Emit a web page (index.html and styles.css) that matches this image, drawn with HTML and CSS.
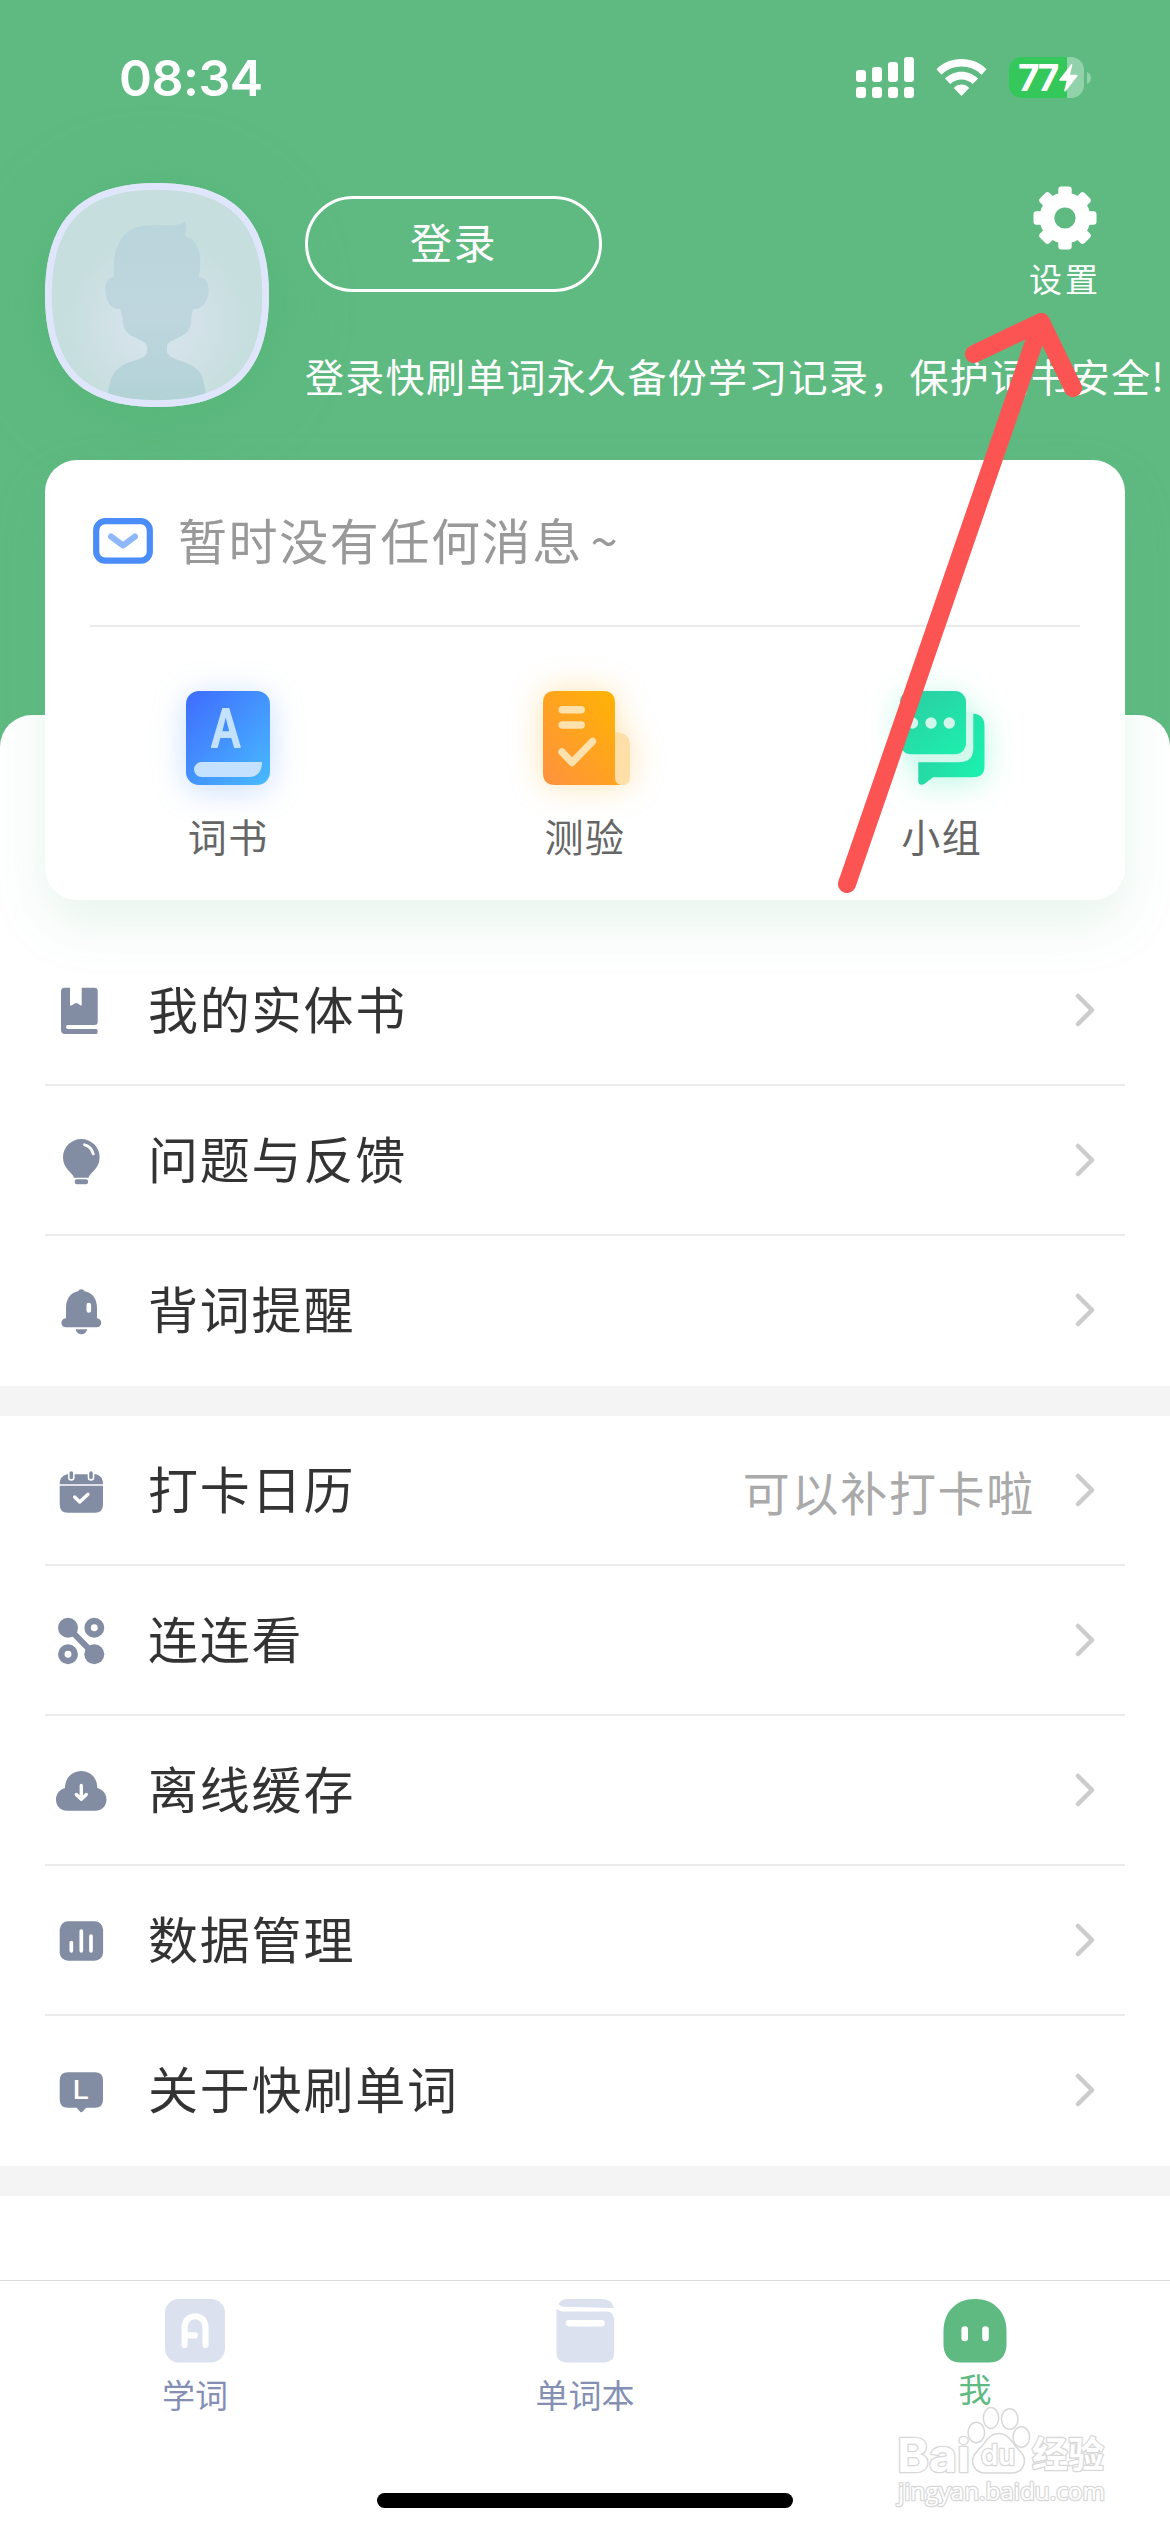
FILE: index.html
```html
<!DOCTYPE html>
<html lang="zh-CN">
<head>
<meta charset="utf-8">
<title>我</title>
<link rel="stylesheet" href="styles.css">
</head>
<body>
<div class="page">
  <header class="header">
    <div class="status">
      <span class="time">08:34</span>
      <div class="status-icons">
        <svg width="58" height="41" viewBox="0 0 58 41" fill="#fff">
          <rect x="0" y="13" width="10" height="12" rx="3"/><rect x="16" y="10" width="10" height="15" rx="3"/>
          <rect x="32" y="5" width="10" height="20" rx="3"/><rect x="48" y="0" width="10" height="25" rx="3"/>
          <rect x="0" y="30" width="10" height="11" rx="3"/><rect x="16" y="30" width="10" height="11" rx="3"/>
          <rect x="32" y="30" width="10" height="11" rx="3"/><rect x="48" y="30" width="10" height="11" rx="3"/>
        </svg>
        <svg width="51" height="37" viewBox="0 0 51 37" fill="#fff">
          <path d="M25.500 0C35 0 44 3.500 50.500 10.200L45.500 15.800C40 10.300 33 7.600 25.500 7.600S11 10.300 5.500 15.800L.5 10.200C7 3.500 16 0 25.500 0Z"/>
          <path d="M25.500 12.800C31.500 12.800 37.500 15.200 42 19.600L36.800 25C33.500 22 29.700 20.500 25.500 20.500S17.500 22 14.200 25L9 19.600C13.500 15.200 19.500 12.800 25.500 12.800Z"/>
          <path d="M25.500 25.500C28.600 25.500 31 26.700 33.200 28.900L25.500 37L17.800 28.900C20 26.700 22.400 25.500 25.500 25.500Z"/>
        </svg>
        <div class="battery">
          <div class="battery-body">
            <span class="battery-num">77</span>
            <svg width="19" height="28" viewBox="0 0 19 28" fill="#fff"><path d="M12 .5C13 0 13.500.5 13.200 1.500L11 10.800H17.500C18.500 10.800 18.800 11.600 18.200 12.400L6.800 27C6 27.900 5 27.400 5.300 26.200L7.600 16.800H1.200C.2 16.800 0 16 .6 15.200Z"/></svg>
          </div>
          <svg width="4" height="12" viewBox="0 0 4 12" fill="#92d2aa"><path d="M0 0C2.500 1 4 3.300 4 6S2.500 11 0 12Z"/></svg>
        </div>
      </div>
    </div>
    <div class="profile">
      <svg class="avatar" width="224" height="224" viewBox="0 0 224 224">
        <defs>
          <radialGradient id="face" gradientUnits="userSpaceOnUse" cx="112" cy="140" r="92"><stop offset=".3" stop-color="#d5e3eb"/><stop offset="1" stop-color="#c6dedd"/></radialGradient>
          <linearGradient id="man" x1="0" y1="0" x2="0" y2="1"><stop offset="0" stop-color="#bad5db"/><stop offset=".5" stop-color="#bfd6df"/><stop offset="1" stop-color="#b1d2d5"/></linearGradient>
          <clipPath id="blob"><path d="M112 0C188 0 224 36 224 112S188 224 112 224S0 188 0 112S36 0 112 0Z"/></clipPath>
        </defs>
        <g clip-path="url(#blob)">
          <rect width="224" height="224" fill="url(#face)"/>
          <path fill="url(#man)" d="M69 94C67 62 77 42 108 42C120 42 134 44 140 38.500C142 43 141 48 140 53C153 57 158 70 154 94C162 94 164 102 163.500 109C163 119 157 127 148 126C145 134 148 142 143 148C138 155 123 157 122 163V169C124 176 136 177 146 182C157 188 160 196 162 224H62C63 196 68 188 78 182C88 177 101 176 102 169V163C101 157 86 155 81 148C77 142 78 134 75 126C67 127 61 119 60.500 109C60 102 62 94 69 94Z"/>
          <path d="M112 0C188 0 224 36 224 112S188 224 112 224S0 188 0 112S36 0 112 0Z" fill="none" stroke="#dfe6fc" stroke-width="13.500"/>
        </g>
      </svg>
      <div class="profile-main">
        <div class="profile-top">
          <button class="login">登录</button>
          <div class="settings">
            <svg width="64" height="64" viewBox="-32 -32 64 64">
              <g fill="#fff">
                <rect x="-6.700" y="-31.500" width="13.400" height="63" rx="3"/>
                <rect x="-6.700" y="-31.500" width="13.400" height="63" rx="3" transform="rotate(45)"/>
                <rect x="-6.700" y="-31.500" width="13.400" height="63" rx="3" transform="rotate(90)"/>
                <rect x="-6.700" y="-31.500" width="13.400" height="63" rx="3" transform="rotate(135)"/>
                <circle r="25.500"/>
              </g>
              <circle r="10.600" fill="#5fba82"/>
            </svg>
            <span>设置</span>
          </div>
        </div>
        <p class="tip">登录快刷单词永久备份学习记录，保护词书安全!</p>
      </div>
    </div>
  </header>

  <section class="card">
    <div class="message">
      <svg width="60" height="46" viewBox="0 0 60 46" fill="none">
        <rect x="3.200" y="3.200" width="53.600" height="39.400" rx="9" stroke="#4a8cf8" stroke-width="6.200"/>
        <path d="M18 18.500L30 27.500L42 18.500" stroke="#8fb8fc" stroke-width="6" stroke-linecap="round" stroke-linejoin="round"/>
      </svg>
      <span>暂时没有任何消息 ~</span>
    </div>
    <div class="shortcuts">
      <div class="shortcut">
        <svg class="glow-blue" width="84" height="94" viewBox="0 0 84 94">
          <defs><linearGradient id="blue" x1="0" y1="0" x2="1" y2="1"><stop offset="0" stop-color="#3f6bff"/><stop offset="1" stop-color="#48bbff"/></linearGradient></defs>
          <rect width="84" height="94" rx="13" fill="url(#blue)"/>
          <text class="book-letter" transform="translate(40.500 55.500) scale(.82 1)" text-anchor="middle">A</text>
          <path d="M15.500 71H76C76 80 71.500 86 63 86H15.500A7.500 7.500 0 0 1 15.500 71Z" fill="#c4e2ff"/>
        </svg>
        <span>词书</span>
      </div>
      <div class="shortcut">
        <svg class="glow-orange" width="84" height="94" viewBox="0 0 84 94">
          <defs><linearGradient id="orange" x1="1" y1="0" x2="0" y2="1"><stop offset="0" stop-color="#ffb500"/><stop offset="1" stop-color="#ff913f"/></linearGradient></defs>
          <path d="M12 0H60Q72 0 72 12V82Q72 92 79 94H12Q0 94 0 82V12Q0 0 12 0Z" fill="url(#orange)"/>
          <path d="M72 41C82 41 87 46 87 55V86Q87 94 79.500 94T72 86Z" fill="#ffdfa8"/>
          <g fill="none" stroke="#ffe1ad" stroke-width="7.400" stroke-linecap="round" stroke-linejoin="round">
            <path d="M19.200 18.800H38.200M19.200 34H38.200M19 61L29 71.500L49.500 50.500"/>
          </g>
        </svg>
        <span>测验</span>
      </div>
      <div class="shortcut">
        <svg class="glow-green" width="84" height="94" viewBox="0 0 84 94">
          <defs><linearGradient id="mint" gradientUnits="userSpaceOnUse" x1="10" y1="0" x2="60" y2="70"><stop offset="0" stop-color="#2bcea2"/><stop offset="1" stop-color="#1cf0ae"/></linearGradient>
          <linearGradient id="mint2" gradientUnits="userSpaceOnUse" x1="15" y1="60" x2="75" y2="90"><stop offset="0" stop-color="#28d3a3"/><stop offset="1" stop-color="#1cf0ae"/></linearGradient></defs>
          <path d="M60 21H73V58Q73 71 60 71H18V58H60Z" fill="#d3f8ec"/>
          <rect width="66" height="63.300" rx="11" fill="url(#mint)"/>
          <path d="M73.300 22.500Q84.500 23.500 84.500 35V75Q84.500 86.300 73 86.300H33L25 92.500C21.500 95 18.300 94 18.300 90V71.300H58Q73.300 71.300 73.300 58Z" fill="url(#mint2)"/>
          <g fill="#d0f7ea"><circle cx="12.500" cy="32" r="5.700"/><circle cx="31" cy="32" r="5.700"/><circle cx="49.300" cy="32" r="5.700"/></g>
        </svg>
        <span>小组</span>
      </div>
    </div>
  </section>

  <main class="panel">
    <ul class="list">
      <li class="row">
        <svg class="icon" viewBox="0 0 54 54"><path d="M10.500 3.700H16V21.500C18 22 20 19.500 22 19S26 22 27.700 21.500V3.700H40.500Q43.700 3.700 43.700 7V38Q43.700 41 40.500 41H14Q12 41 12 43T14 45H42.500Q43.700 45.200 43.700 47.500T42.500 50H11Q7 50 7 46V7.500Q7 3.700 10.500 3.700Z"/></svg>
        <span class="label">我的实体书</span><svg class="chevron" viewBox="0 0 20 34"><path d="M3 3L17 17L3 31"/></svg>
      </li>
      <li class="row">
        <svg class="icon" viewBox="0 0 54 54"><path d="M27.300 5A18.300 18.300 0 0 1 45.600 23.300C45.600 35 36.500 38 34.500 43.700H20C18 38 9 35 9 23.300A18.300 18.300 0 0 1 27.300 5Z"/><rect x="20.700" y="45.300" width="13.400" height="4.900" rx="2.200"/><path d="M30.500 10.800Q37.500 12.500 39.300 20" fill="none" stroke="#fff" stroke-width="2.800" stroke-linecap="round"/></svg>
        <span class="label">问题与反馈</span><svg class="chevron" viewBox="0 0 20 34"><path d="M3 3L17 17L3 31"/></svg>
      </li>
      <li class="row">
        <svg class="icon" viewBox="0 0 54 54"><path d="M12 24C12 14.500 17 8.500 24 7.300A3.600 3.600 0 0 1 30.600 7.300C38 8.500 43 14.500 43 24V34.300A4.500 4.500 0 0 1 42.500 43.300H11.800A4.500 4.500 0 0 1 12 34.300Z"/><path d="M21.500 45.200H33.300Q32 50.200 27.400 50.200T21.500 45.200Z"/><rect x="32.500" y="18.700" width="4.600" height="10" rx="2.300" fill="#fff"/></svg>
        <span class="label">背词提醒</span><svg class="chevron" viewBox="0 0 20 34"><path d="M3 3L17 17L3 31"/></svg>
      </li>
    </ul>
    <ul class="list">
      <li class="row">
        <svg class="icon" viewBox="0 0 54 54"><path d="M13 10.300H42Q49 12 49 20.300H5.700Q5.700 12 13 10.300Z"/><path d="M5.700 21.700H49V40.500Q49 48.700 41 48.700H13.700Q5.700 48.700 5.700 40.500Z"/><g stroke-linecap="round" fill="none"><path d="M17.300 9V13.500M37 9V13.500" stroke="#fff" stroke-width="6.600"/><path d="M17.300 9V13.500M37 9V13.500" stroke="#828ca3" stroke-width="3.600"/><path d="M20.700 33L25.700 38L34 30.300" stroke="#fff" stroke-width="3.400" stroke-linejoin="round"/></g></svg>
        <span class="label">打卡日历</span><span class="note">可以补打卡啦</span><svg class="chevron" viewBox="0 0 20 34"><path d="M3 3L17 17L3 31"/></svg>
      </li>
      <li class="row">
        <svg class="icon" viewBox="0 0 54 54"><circle cx="14" cy="13.700" r="10"/><circle cx="40.300" cy="40.300" r="10"/><path d="M14 13.700L40.300 40.300" stroke="#828ca3" stroke-width="6"/><g fill="none" stroke="#828ca3" stroke-width="6.500"><circle cx="40.300" cy="13.700" r="6.700"/><circle cx="14" cy="40.300" r="6.700"/></g></svg>
        <span class="label">连连看</span><svg class="chevron" viewBox="0 0 20 34"><path d="M3 3L17 17L3 31"/></svg>
      </li>
      <li class="row">
        <svg class="icon" viewBox="0 0 54 54"><path d="M13 46.700C6 46.700 2 41.500 2 35.500C2 29.500 6 25.500 11 24C11 14 18 7 27.300 7S43.300 14 43.300 24C48.500 25.500 52.500 29.500 52.500 35.500C52.500 41.500 48.500 46.700 41.500 46.700Z"/><path d="M27.300 21.500V35M22.300 30.500L27.300 35.300L32.300 30.500" fill="none" stroke="#fff" stroke-width="3.400" stroke-linecap="round" stroke-linejoin="round"/></svg>
        <span class="label">离线缓存</span><svg class="chevron" viewBox="0 0 20 34"><path d="M3 3L17 17L3 31"/></svg>
      </li>
      <li class="row">
        <svg class="icon" viewBox="0 0 54 54"><rect x="5.700" y="7.300" width="43.400" height="39.500" rx="8.500"/><path d="M17.300 28.500V36.800M27.300 17V36.800M37 22V36.800" stroke="#fff" stroke-width="3.700" stroke-linecap="round"/></svg>
        <span class="label">数据管理</span><svg class="chevron" viewBox="0 0 20 34"><path d="M3 3L17 17L3 31"/></svg>
      </li>
      <li class="row">
        <svg class="icon" viewBox="0 0 54 54"><path d="M14 8.300H41Q49 8.300 49 16.500V35.500Q49 43.700 41 43.700H32L29 47.300Q27.300 49 25.700 47.300L22.700 43.700H14Q5.700 43.700 5.700 35.500V16.500Q5.700 8.300 14 8.300Z"/><text class="badge-letter" transform="translate(18.600 35) scale(1.180 1)">L</text></svg>
        <span class="label">关于快刷单词</span><svg class="chevron" viewBox="0 0 20 34"><path d="M3 3L17 17L3 31"/></svg>
      </li>
    </ul>
  </main>

  <nav class="tabs">
    <div class="tab">
      <svg width="64" height="64" viewBox="0 0 64 64"><rect x="2" width="60" height="63.500" rx="14" fill="#dbe1ee"/><path d="M21.600 46V28.500C21.600 13.500 42.500 13.500 42.500 28.500V46M21.600 36.300H31.800" fill="none" stroke="#fff" stroke-width="6.200" stroke-linecap="round"/></svg>
      <span>学词</span>
    </div>
    <div class="tab">
      <svg width="64" height="64" viewBox="0 0 64 64"><path d="M15 0H48Q59 0 61 9L10 7.700Q7 7.500 5.500 5Q8 0 15 0Z" fill="#dbe1ee"/><path d="M3.500 9.500Q6 12.500 11 12.500H54Q59.500 12.500 60.500 18.500L61.200 20V53Q61.200 63.500 51 63.500H14Q3.500 63.500 3.500 53Z" fill="#dbe1ee"/><path d="M16 24.300H48.500" stroke="#fff" stroke-width="6.600" stroke-linecap="round"/></svg>
      <span>单词本</span>
    </div>
    <div class="tab active">
      <svg width="64" height="64" viewBox="0 0 64 64"><path d="M32 0C51 0 63.500 13 63.500 32V47Q62 63.500 46 63.500H18Q2 63.500.5 47V32C.5 13 13 0 32 0Z" fill="#5fba82"/><path d="M21.700 30.500V39M42.500 30.500V39" stroke="#fff" stroke-width="6.600" stroke-linecap="round"/></svg>
      <span>我</span>
    </div>
  </nav>
  <div class="home-indicator"></div>

  <svg class="watermark" width="230" height="110" viewBox="0 0 230 110">
    <g fill="#fff" stroke="#d8d8d8" stroke-width="1.500">
      <text class="wm-brand" x="7" y="65" textLength="73" lengthAdjust="spacingAndGlyphs">Bai</text>
      <ellipse cx="86.300" cy="25.500" rx="8.300" ry="10.300"/><ellipse cx="101" cy="11" rx="7.700" ry="10.500"/><ellipse cx="119.700" cy="12" rx="8.300" ry="10.300"/><ellipse cx="131.300" cy="30" rx="8.300" ry="10.300"/>
      <path d="M108.500 26.500C117 26.500 121 33 126 40C132 46 136 50 134 57C131 68 121 66 108.500 66S86 68 83 57C81 50 86 45 92 39C97 33 100 26.500 108.500 26.500Z"/>
      <text class="wm-du" x="91" y="58" textLength="34" lengthAdjust="spacingAndGlyphs">du</text>
      <text class="wm-cjk" x="142" y="61">经验</text>
      <text class="wm-url" x="8" y="93" textLength="207" lengthAdjust="spacingAndGlyphs">jingyan.baidu.com</text>
    </g>
  </svg>
  <svg class="arrow" width="260" height="600" viewBox="0 0 260 600" fill="none" stroke="#fc5353" stroke-linecap="round" stroke-linejoin="round">
    <path d="M17 584L211 22" stroke-width="18"/><path d="M144 54L211 22L243 88" stroke-width="18"/>
  </svg>
</div>
</body>
</html>
```

FILE: styles.css
```css
* { box-sizing: border-box; }

body {
  margin: 0;
  font-family: "Noto Sans CJK SC", "Noto Sans", sans-serif;
}

ul, p { margin: 0; padding: 0; list-style: none; }
svg { display: block; flex: none; }

.page {
  position: relative;
  width: 1170px;
  height: 2532px;
  overflow: hidden;
  display: flex;
  flex-direction: column;
  background: #5fba82;
}

/* Header */
.header { height: 460px; flex: none; color: #fff; }

.status {
  height: 155px;
  padding: 0 79px 0 119px;
  display: flex;
  align-items: center;
  justify-content: space-between;
}
.time {
  font: 600 50px/60px Inter, sans-serif;
  letter-spacing: -.5px;
}
.status-icons { display: flex; align-items: center; gap: 22px; }
.battery { display: flex; align-items: center; gap: 3px; }
.battery-body {
  width: 75px;
  height: 41px;
  padding-left: 9px;
  border-radius: 13px;
  background: linear-gradient(90deg, #34c759 58px, #92d2aa 58px);
  display: flex;
  align-items: center;
  gap: 1px;
}
.battery-num {
  width: 40px;
  font: 700 37px/40px Inter, sans-serif;
  letter-spacing: -2.500px;
}

.profile { display: flex; gap: 36px; padding: 28px 0 0 45px; }
.avatar {
  overflow: visible;
  border-radius: 50%;
  box-shadow: 0 8px 64px 12px rgba(82, 180, 112, .5);
}
.profile-main { flex: 1; min-width: 0; }
.profile-top { display: flex; justify-content: space-between; padding-right: 69px; }
.login {
  width: 297px;
  height: 96px;
  margin-top: 13px;
  padding: 0 0 7px;
  border: 3px solid #fff;
  border-radius: 48px;
  background: none;
  color: #fff;
  font: 400 42px/60px "Noto Sans CJK SC", sans-serif;
  letter-spacing: 1.500px;
}
.settings {
  width: 72px;
  margin-top: 3px;
  display: flex;
  flex-direction: column;
  align-items: center;
  gap: 8px;
  font-size: 33px;
  line-height: 40px;
  letter-spacing: 3px;
  white-space: nowrap;
}
.tip {
  margin-top: 52px;
  font-size: 39px;
  line-height: 50px;
  letter-spacing: 1.300px;
  white-space: nowrap;
}

/* Card */
.card {
  position: relative;
  z-index: 1;
  flex: none;
  height: 440px;
  margin: 0 45px -185px;
  border-radius: 32px;
  background: #fff;
  box-shadow: 0 24px 56px rgba(80, 175, 120, .13);
}
.message {
  height: 167px;
  margin: 0 45px;
  padding: 0 0 4px 3px;
  border-bottom: 2px solid #ebebeb;
  display: flex;
  align-items: center;
  gap: 25px;
  color: #999;
  font-size: 49px;
  line-height: 60px;
  letter-spacing: 1.600px;
  word-spacing: -5px;
}
.message span { margin-top: -4px; }
.shortcuts {
  display: grid;
  grid-template-columns: repeat(3, 1fr);
  padding: 64px 5px 0;
}
.shortcut {
  display: flex;
  flex-direction: column;
  align-items: center;
  gap: 25px;
  color: #666;
  font-size: 39px;
  line-height: 50px;
  letter-spacing: 1.500px;
}
.shortcut svg { overflow: visible; }
.glow-blue { filter: drop-shadow(0 5px 16px rgba(72, 145, 255, .3)); }
.glow-orange { filter: drop-shadow(0 0 16px rgba(255, 176, 30, .35)); }
.glow-green { filter: drop-shadow(0 5px 16px rgba(30, 230, 170, .3)); }
.book-letter {
  font: 500 52px Inter, sans-serif;
  fill: #c4e2ff;
  stroke: #c4e2ff;
  stroke-width: 2;
  stroke-linejoin: round;
}

/* List */
.panel {
  flex: 1;
  padding-top: 221px;
  border-radius: 32px 32px 0 0;
  background: #fff;
}
.list { padding: 0 45px; border-bottom: 30px solid #f4f4f4; }
.row {
  height: 150px;
  padding: 0 30px 0 9px;
  border-bottom: 2px solid #ebebeb;
  display: flex;
  align-items: center;
}
.row:last-child { border-color: transparent; }
.icon { width: 54px; height: 54px; margin-top: 2px; fill: #828ca3; }
.label {
  flex: 1;
  margin: -7px 0 0 40px;
  color: #333;
  font-size: 50px;
  line-height: 64px;
  letter-spacing: 1.800px;
}
.note {
  margin: 2px 40px 0 0;
  color: #aaa;
  font-size: 47px;
  line-height: 60px;
  letter-spacing: 1.700px;
}
.chevron {
  width: 20px;
  height: 34px;
  fill: none;
  stroke: #ccc;
  stroke-width: 4.500;
  stroke-linecap: round;
  stroke-linejoin: round;
}
.badge-letter { font: 500 25px Inter, sans-serif; fill: #fff; }

/* Tab bar */
.tabs {
  flex: none;
  height: 213px;
  padding-top: 18px;
  border-top: 1px solid #dcdcdc;
  background: #fff;
  display: grid;
  grid-template-columns: repeat(3, 1fr);
}
.tab {
  display: flex;
  flex-direction: column;
  align-items: center;
  gap: 11px;
  color: #8490b3;
  font-size: 33px;
  line-height: 40px;
}
.tab.active { color: #5fba82; gap: 5px; }
.home-indicator {
  flex: none;
  height: 39px;
  padding: 0 377px;
  background: #fff;
}
.home-indicator::before {
  content: "";
  display: block;
  height: 15px;
  border-radius: 8px;
  background: #000;
}

/* Overlays */
.watermark { position: absolute; left: 890px; top: 2407px; z-index: 2; overflow: visible; }
.watermark text { paint-order: stroke; stroke-width: 2.600; stroke-linejoin: round; }
.wm-brand { font: 700 46px Inter, sans-serif; }
.wm-du { font: 600 28px Inter, sans-serif; }
.wm-cjk { font: 700 36px "Noto Sans CJK SC", sans-serif; }
.wm-url { font: 400 24px "Open Sans", sans-serif; }
.arrow { position: absolute; left: 830px; top: 300px; z-index: 3; }
```
